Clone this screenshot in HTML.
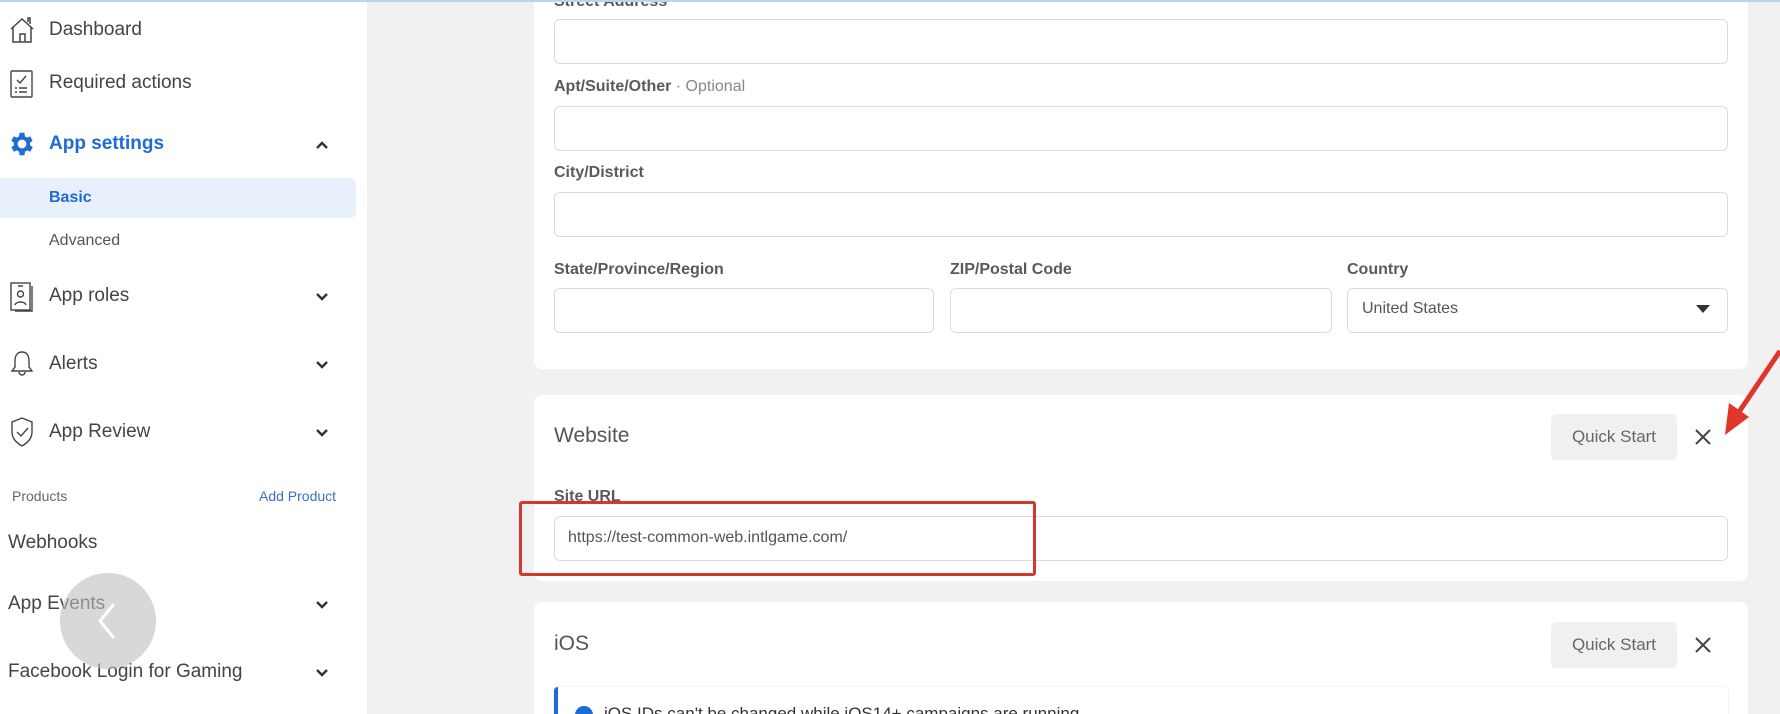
<!DOCTYPE html>
<html><head><meta charset="utf-8"><style>
*{margin:0;padding:0;box-sizing:border-box}
html,body{width:1780px;height:714px;overflow:hidden}
body{font-family:"Liberation Sans",Arial,sans-serif;color:#444}
#wrap{position:relative;width:1780px;height:714px;overflow:hidden;background:#f1f1f1}
.a{position:absolute}
#side{left:0;top:0;width:367px;height:714px;background:#fff}
.it{position:absolute;left:49px;font-size:19px;color:#444;line-height:22px}
.ic{position:absolute;left:9px}
.chev{position:absolute;left:314px;width:16px;height:12px}
.card{position:absolute;left:534px;width:1214px;background:#fff;border-radius:8px}
.inp{position:absolute;height:45px;border:1px solid #dcdcdc;border-radius:6px;background:#fff}
.lbl{position:absolute;font-size:16px;font-weight:bold;color:#5a5a5a}
.qs{position:absolute;left:1551px;width:126px;height:46px;background:#f0f0f0;border-radius:5px;font-size:17px;color:#666;text-align:center;line-height:46px}
.x{position:absolute;left:1693px;width:20px;height:20px}
.tt{position:absolute;left:554px;font-size:21px;color:#555}
</style></head><body><div id="wrap">
<div class="a" style="left:0;top:0;width:1780px;height:2px;background:#b9d3f0;z-index:5"></div>
<div id="side" class="a">
<svg class="ic" style="top:16px" width="26" height="28" viewBox="0 0 26 28" fill="none" stroke="#444" stroke-width="1.5"><path d="M2 13L13 3l11 10M4 11v15h18V11M11 26v-8h5v8M19 6V2h2v6"/></svg>
<div class="it" style="top:19px">Dashboard</div>
<svg class="ic" style="top:69px" width="26" height="30" viewBox="0 0 26 30" fill="none" stroke="#444" stroke-width="1.4"><rect x="2" y="2" width="21" height="26" rx="1"/><path d="M8 11l3 3 6-7M6 19h2M10 19h8M6 23h2M10 23h8"/></svg>
<div class="it" style="top:72px">Required actions</div>
<svg class="ic" style="left:7px;top:129px" width="30" height="30" viewBox="0 0 24 24"><path fill="#1f6bd6" d="M19.4 13a7.5 7.5 0 000-2l2.1-1.6-2-3.5-2.5 1a7 7 0 00-1.7-1L15 3h-4l-.4 2.9a7 7 0 00-1.7 1l-2.5-1-2 3.5L6.6 11a7.5 7.5 0 000 2l-2.1 1.6 2 3.5 2.5-1a7 7 0 001.7 1L11 21h4l.4-2.9a7 7 0 001.7-1l2.5 1 2-3.5zM13 15.5a3.5 3.5 0 110-7 3.5 3.5 0 010 7z" transform="translate(-1 0)"/></svg>
<div class="it" style="top:133px;font-weight:bold;color:#1f6bd6">App settings</div>
<svg class="chev" style="top:139px" viewBox="0 0 16 12"><path d="M3 9l5-5 5 5" fill="none" stroke="#333" stroke-width="2.4"/></svg>
<div class="a" style="left:0;top:178px;width:356px;height:40px;background:#e8f0fb;border-radius:0 6px 6px 0"></div>
<div class="it" style="top:187px;font-size:16px;font-weight:bold;color:#1f6bd6">Basic</div>
<div class="it" style="top:230px;font-size:16px;color:#555">Advanced</div>
<svg class="ic" style="top:281px" width="26" height="32" viewBox="0 0 26 32" fill="none" stroke="#444" stroke-width="1.4"><rect x="2" y="2" width="19" height="27"/><path d="M23 5v25H6"/><circle cx="11.5" cy="13" r="3"/><path d="M6 24c1-4 10-4 11 0M9 5h5"/></svg>
<div class="it" style="top:285px">App roles</div>
<svg class="chev" style="top:291px" viewBox="0 0 16 12"><path d="M3 3l5 5 5-5" fill="none" stroke="#333" stroke-width="2.4"/></svg>
<svg class="ic" style="top:349px" width="26" height="30" viewBox="0 0 26 30" fill="none" stroke="#444" stroke-width="1.4"><path d="M13 3c-5 0-7 4-7 9v6l-3 4h20l-3-4v-6c0-5-2-9-7-9zM10 23a3 3 0 006 0"/></svg>
<div class="it" style="top:353px">Alerts</div>
<svg class="chev" style="top:359px" viewBox="0 0 16 12"><path d="M3 3l5 5 5-5" fill="none" stroke="#333" stroke-width="2.4"/></svg>
<svg class="ic" style="top:416px" width="26" height="32" viewBox="0 0 26 32" fill="none" stroke="#444" stroke-width="1.4"><path d="M13 2l10 4v10c0 7-5 11-10 14C8 27 3 23 3 16V6z"/><path d="M8 16l4 4 7-8"/></svg>
<div class="it" style="top:421px">App Review</div>
<svg class="chev" style="top:427px" viewBox="0 0 16 12"><path d="M3 3l5 5 5-5" fill="none" stroke="#333" stroke-width="2.4"/></svg>
<div class="a" style="left:12px;top:488px;font-size:14px;color:#666">Products</div>
<div class="a" style="left:259px;top:488px;font-size:14px;color:#3b6fc4">Add Product</div>
<div class="it" style="left:8px;top:532px">Webhooks</div>
<div class="it" style="left:8px;top:593px">App Events</div>
<svg class="chev" style="top:599px" viewBox="0 0 16 12"><path d="M3 3l5 5 5-5" fill="none" stroke="#333" stroke-width="2.4"/></svg>
<div class="it" style="left:8px;top:661px">Facebook Login for Gaming</div>
<svg class="chev" style="top:667px" viewBox="0 0 16 12"><path d="M3 3l5 5 5-5" fill="none" stroke="#333" stroke-width="2.4"/></svg>
<div class="a" style="left:60px;top:573px;width:96px;height:96px;border-radius:50%;background:rgba(190,190,190,.6)"></div>
<svg class="a" style="left:92px;top:600px" width="30" height="42" viewBox="0 0 30 42"><path d="M22 4L8 21l14 17" fill="none" stroke="#fff" stroke-width="3"/></svg>
</div>

<div class="card" style="top:-10px;height:379px"></div>
<div class="lbl" style="left:554px;top:-7px">Street Address</div>
<div class="inp" style="left:554px;top:19px;width:1174px"></div>
<div class="lbl" style="left:554px;top:78px">Apt/Suite/Other <span style="font-weight:normal;color:#888">· Optional</span></div>
<div class="inp" style="left:554px;top:106px;width:1174px"></div>
<div class="lbl" style="left:554px;top:164px">City/District</div>
<div class="inp" style="left:554px;top:192px;width:1174px"></div>
<div class="lbl" style="left:554px;top:261px">State/Province/Region</div>
<div class="lbl" style="left:950px;top:261px">ZIP/Postal Code</div>
<div class="lbl" style="left:1347px;top:261px">Country</div>
<div class="inp" style="left:554px;top:288px;width:380px"></div>
<div class="inp" style="left:950px;top:288px;width:382px"></div>
<div class="inp" style="left:1347px;top:288px;width:381px"></div>
<div class="a" style="left:1362px;top:300px;font-size:16px;color:#555">United States</div>
<svg class="a" style="left:1696px;top:304px" width="14" height="10"><path d="M0 1h14L7 9z" fill="#333"/></svg>

<div class="card" style="top:395px;height:186px"></div>
<div class="tt" style="top:424px">Website</div>
<div class="qs" style="top:414px">Quick Start</div>
<svg class="x" style="top:427px" viewBox="0 0 20 20"><path d="M3 3l14 14M17 3L3 17" stroke="#444" stroke-width="2"/></svg>
<div class="lbl" style="left:554px;top:488px">Site URL</div>
<div class="inp" style="left:554px;top:516px;width:1174px;height:45px"></div>
<div class="a" style="left:568px;top:529px;font-size:16px;color:#555">https://test-common-web.intlgame.com/</div>
<div class="a" style="left:519px;top:501px;width:517px;height:75px;border:3px solid #d3382f;border-radius:3px"></div>

<div class="card" style="top:602px;height:130px"></div>
<div class="tt" style="top:632px">iOS</div>
<div class="qs" style="top:622px">Quick Start</div>
<svg class="x" style="top:635px" viewBox="0 0 20 20"><path d="M3 3l14 14M17 3L3 17" stroke="#444" stroke-width="2"/></svg>
<div class="a" style="left:554px;top:687px;width:1174px;height:40px;border-left:4px solid #1f6bd6;border-radius:4px;background:#fff;box-shadow:0 0 2px #ddd"></div>
<div class="a" style="left:575px;top:706px;width:18px;height:18px;border-radius:50%;background:#1f6bd6"></div>
<div class="a" style="left:604px;top:704px;font-size:17px;color:#333">iOS IDs can't be changed while iOS14+ campaigns are running</div>

<svg class="a" style="left:1715px;top:345px" width="65" height="95" viewBox="0 0 65 95"><path d="M65 6L22 70" stroke="#e0352b" stroke-width="5"/><path d="M10 90L14 58 34 72z" fill="#e0352b"/></svg>
</div></body></html>
